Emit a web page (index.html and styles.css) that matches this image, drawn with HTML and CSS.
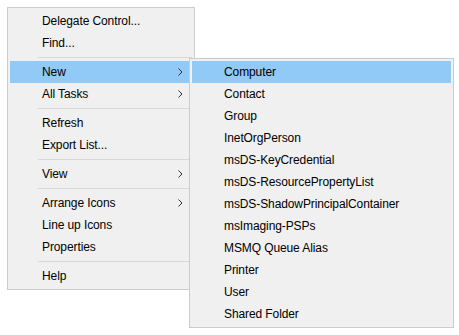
FILE: index.html
```html
<!DOCTYPE html>
<html lang="en">
<head>
<meta charset="UTF-8">
<title>Context menu</title>
<link rel="stylesheet" href="styles.css">
</head>
<body>

<div class="page">
  <ul class="menu">
    <li class="item">Delegate Control...</li>
    <li class="item">Find...</li>
    <li class="sep"></li>
    <li class="item active has-sub">
      New
      <svg class="arrow" width="5" height="8" viewBox="0 0 5 8"><polyline points="0.5,0.5 4,4 0.5,7.5" fill="none" stroke="#333" stroke-width="1"/></svg>

      <ul class="menu submenu">
        <li class="item active">Computer</li>
        <li class="item">Contact</li>
        <li class="item">Group</li>
        <li class="item">InetOrgPerson</li>
        <li class="item">msDS-KeyCredential</li>
        <li class="item">msDS-ResourcePropertyList</li>
        <li class="item">msDS-ShadowPrincipalContainer</li>
        <li class="item">msImaging-PSPs</li>
        <li class="item">MSMQ Queue Alias</li>
        <li class="item">Printer</li>
        <li class="item">User</li>
        <li class="item">Shared Folder</li>
      </ul>
    </li>
    <li class="item">
      All Tasks
      <svg class="arrow" width="5" height="8" viewBox="0 0 5 8"><polyline points="0.5,0.5 4,4 0.5,7.5" fill="none" stroke="#333" stroke-width="1"/></svg>
    </li>
    <li class="sep"></li>
    <li class="item">Refresh</li>
    <li class="item">Export List...</li>
    <li class="sep"></li>
    <li class="item">
      View
      <svg class="arrow" width="5" height="8" viewBox="0 0 5 8"><polyline points="0.5,0.5 4,4 0.5,7.5" fill="none" stroke="#333" stroke-width="1"/></svg>
    </li>
    <li class="sep"></li>
    <li class="item">
      Arrange Icons
      <svg class="arrow" width="5" height="8" viewBox="0 0 5 8"><polyline points="0.5,0.5 4,4 0.5,7.5" fill="none" stroke="#333" stroke-width="1"/></svg>
    </li>
    <li class="item">Line up Icons</li>
    <li class="item">Properties</li>
    <li class="sep"></li>
    <li class="item">Help</li>
  </ul>
</div>

</body>
</html>
```

FILE: styles.css
```css
* {
  box-sizing: border-box;
  padding: 0;
  margin: 0;
}

html, body {
  height: 100%;
}

body {
  background: #fff;
  font-family: "Liberation Sans", Arial, sans-serif;
  font-size: 12px;
  letter-spacing: -0.1px;
  color: #000;
}

.page {
  min-height: 100%;
  padding: 7px;
}

.menu {
  list-style: none;
  width: 188px;
  padding: 2px;
  background: #f0f0f0;
  border: 1px solid #cccccc;
}

.item {
  display: flex;
  align-items: center;
  height: 22px;
  padding-left: 32px;
  white-space: nowrap;
}

.item.active {
  background: #91c9f7;
}

.sep {
  height: 7px;
  margin-left: 28px;
  padding-top: 3px;
}

.sep::after {
  content: "";
  display: block;
  height: 1px;
  background: #d7d7d7;
}

.arrow {
  margin-left: auto;
  margin-right: 9px;
}

.has-sub {
  position: relative;
}

/* submenu sits over the parent menu */
.submenu {
  position: absolute;
  top: -3px;
  left: 179px;
  width: 265px;
}
```
